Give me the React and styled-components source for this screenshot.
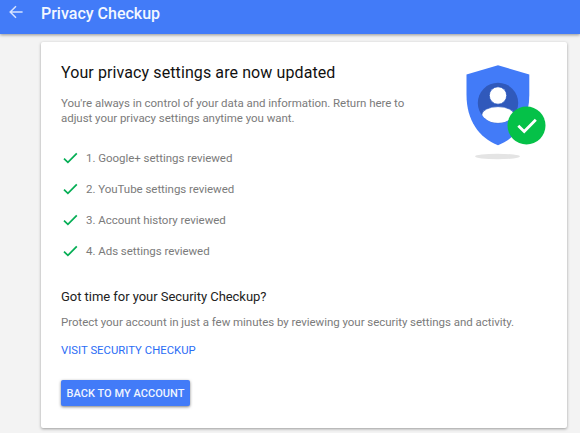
import React from "react";
import styled, { createGlobalStyle } from "styled-components";

const steps = [
  "1. Google+ settings reviewed",
  "2. YouTube settings reviewed",
  "3. Account history reviewed",
  "4. Ads settings reviewed",
];

const App = () => {
  return (
    <>
      <GlobalStyle />
      <Header>
        <BackButton aria-label="Back">
          <svg width="14" height="14" viewBox="0 0 14 14">
            <path d="M13.6 7H1.4M7 1.2L1.2 7L7 12.8" />
          </svg>
        </BackButton>
        <HeaderTitle>Privacy Checkup</HeaderTitle>
      </Header>
      <Main>
        <Card>
          <Intro>
            <IntroText>
              <Heading>Your privacy settings are now updated</Heading>
              <Text>
                You're always in control of your data and information. Return here to
                <br />
                adjust your privacy settings anytime you want.
              </Text>
            </IntroText>
            <ShieldIcon />
          </Intro>
          <StepList>
            {steps.map((step) => (
              <Step key={step}>
                <Check viewBox="0 0 15 12">
                  <path d="M1 6.6L4.9 10.4L13.8 1.3" />
                </Check>
                {step}
              </Step>
            ))}
          </StepList>
          <SubHeading>Got time for your Security Checkup?</SubHeading>
          <SecurityText>
            Protect your account in just a few minutes by reviewing your security settings and activity.
          </SecurityText>
          <CheckupLink href="#">VISIT SECURITY CHECKUP</CheckupLink>
          <AccountButton>BACK TO MY ACCOUNT</AccountButton>
        </Card>
      </Main>
    </>
  );
};

const ShieldIcon = () => (
  <Shield viewBox="0 0 84 98">
    <defs>
      <clipPath id="avatar">
        <circle cx="34" cy="39" r="20.2" />
      </clipPath>
    </defs>
    <ellipse cx="33.5" cy="92.5" rx="22.4" ry="2.7" fill="#e4e4e4" />
    <path
      d="M34 1.2L65.3 10.4V31C65.3 56 53 74 34 81.3C15 74 2.5 56 2.5 31V10.4Z"
      fill="#427bf8"
    />
    <circle cx="34" cy="39" r="20.2" fill="#3059bb" />
    <g fill="#fff" stroke="#1d4fbd" strokeWidth="0.7" clipPath="url(#avatar)">
      <circle cx="34" cy="31.5" r="8.7" />
      <ellipse cx="34" cy="51" rx="16.3" ry="8.4" />
    </g>
    <circle cx="62.5" cy="61.5" r="19" fill="#05c148" />
    <path d="M54.3 61.8L60.2 67.5L71.8 55.8" fill="none" stroke="#fff" strokeWidth="2.8" />
  </Shield>
);

const GlobalStyle = createGlobalStyle`
  * {
    box-sizing: border-box;
  }
  body {
    margin: 0;
    background: #f3f3f3;
    font-family: Roboto, sans-serif;
    overflow: hidden;
  }
`;

const Header = styled.header`
  display: flex;
  height: 34px;
  padding: 0 9px 8px;
  align-items: center;
  background: #427bf8;
  box-shadow: 0 1px 3px rgba(0, 0, 0, 0.4);
`;

const BackButton = styled.button`
  display: flex;
  width: 33px;
  padding: 0 0 2px;
  border: 0;
  background: none;
  svg {
    fill: none;
    stroke: #d5e2ff;
    stroke-width: 1.5;
  }
`;

const HeaderTitle = styled.h1`
  margin: 0 0 0 -1px;
  padding-top: 1px;
  font-size: 16px;
  font-weight: 500;
  line-height: 26px;
  color: #f3f7ff;
`;

const Main = styled.main`
  padding: 8px 13px 5px 41px;
`;

const Card = styled.section`
  display: flex;
  flex-direction: column;
  align-items: flex-start;
  height: 386px;
  padding: 21px 19px 22px 20px;
  border-radius: 2px;
  background: #fff;
  box-shadow: 0 1px 3px rgba(0, 0, 0, 0.36);
`;

const Intro = styled.div`
  display: flex;
  justify-content: space-between;
  width: 100%;
  height: 88px;
`;

const IntroText = styled.div`
  white-space: nowrap;
`;

const Heading = styled.h2`
  margin: 0 0 13px;
  font-size: 16px;
  font-weight: 400;
  line-height: 20px;
  letter-spacing: 0.1px;
  color: #111;
`;

const Text = styled.p`
  margin: 0;
  font-size: 11.5px;
  line-height: 15px;
  letter-spacing: -0.04px;
  color: #7b7b7b;
`;

const Shield = styled.svg`
  flex: none;
  width: 84px;
  height: 98px;
  margin-top: 1px;
`;

const StepList = styled.ul`
  display: flex;
  flex-direction: column;
  gap: 16px;
  margin: 0;
  padding: 0 0 0 2px;
  list-style: none;
`;

const Step = styled.li`
  display: flex;
  align-items: center;
  gap: 8px;
  font-size: 11.5px;
  line-height: 15px;
  letter-spacing: -0.04px;
  color: #7b7b7b;
`;

const Check = styled.svg`
  width: 15px;
  height: 12px;
  margin-bottom: 1px;
  fill: none;
  stroke: #05ae55;
  stroke-width: 1.7;
`;

const SubHeading = styled.h3`
  margin: 29px 0 0;
  font-size: 13px;
  font-weight: 400;
  line-height: 18px;
  letter-spacing: -0.04px;
  color: #222;
`;

const SecurityText = styled(Text)`
  margin-top: 9px;
  white-space: nowrap;
`;

const CheckupLink = styled.a`
  margin-top: 13px;
  font-size: 11.3px;
  line-height: 15px;
  letter-spacing: 0.03px;
  color: #2b6df5;
  text-decoration: none;
`;

const AccountButton = styled.button`
  width: 129px;
  height: 26px;
  margin-top: 22px;
  padding: 0;
  border: 0;
  border-radius: 2px;
  background: #427bf8;
  box-shadow: 0 1px 3px rgba(0, 0, 0, 0.5);
  font-family: inherit;
  font-size: 11px;
  font-weight: 500;
  letter-spacing: 0.05px;
  color: #f0f5ff;
  white-space: nowrap;
`;

export default App;
